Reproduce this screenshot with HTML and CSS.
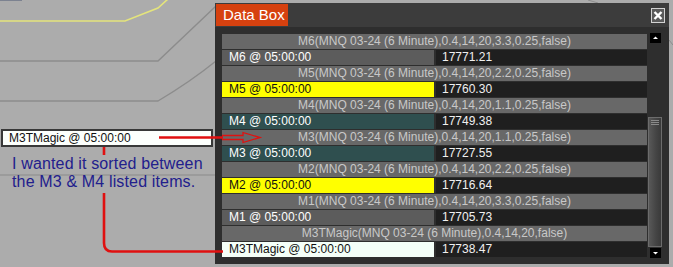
FILE: index.html
```html
<!DOCTYPE html>
<html lang="en">
<head>
    <meta charset="UTF-8">
    <meta name="viewport" content="width=device-width, initial-scale=1.0">
    <title>Data Box</title>
    <link rel="stylesheet" href="styles.css">
</head>
<body>
    <div class="desk">
        <!-- chart lines behind the window -->
        <svg class="backdrop" width="673" height="267" viewBox="0 0 673 267">
            <polyline points="0,21 125,21 158,8 168,-1" fill="none" stroke="#e4e47c" stroke-width="1.6"/>
            <polyline points="0,61 158,61 216,6" fill="none" stroke="#8c8c8c" stroke-width="1.4"/>
            <path d="M0,101 L158,101 Q190,82 216,61" fill="none" stroke="#8c8c8c" stroke-width="1.4"/>
            <line x1="0" y1="175" x2="216" y2="175" stroke="#8a8a8a" stroke-width="1"/>
            <line x1="0" y1="0.5" x2="22" y2="0.5" stroke="#7c8290" stroke-width="1"/>
            <line x1="588" y1="0" x2="598" y2="3" stroke="#8c8c8c" stroke-width="1"/>
            <line x1="669" y1="40" x2="673" y2="45" stroke="#8c8c8c" stroke-width="1"/>
        </svg>

        <div class="note-box">M3TMagic @ 05:00:00</div>
        <p class="note-text">I wanted it sorted between<br>the M3 &amp; M4 listed items.</p>

        <section class="window">
            <header class="titlebar">
                <span class="title">Data Box</span>
                <span class="close">
                    <svg width="12" height="13" viewBox="0 0 12 13">
                        <path d="M2.5,3 L9.5,10 M9.5,3 L2.5,10" stroke="#fff" stroke-width="2.4"/>
                    </svg>
                </span>
            </header>
            <div class="frame">
                <div class="list">
                    <div class="head">M6(MNQ 03-24 (6 Minute),0.4,14,20,3.3,0.25,false)</div>
                    <div class="item">
                        <span class="label">M6 @ 05:00:00</span>
                        <span class="value">17771.21</span>
                    </div>

                    <div class="head">M5(MNQ 03-24 (6 Minute),0.4,14,20,2.2,0.25,false)</div>
                    <div class="item">
                        <span class="label yellow">M5 @ 05:00:00</span>
                        <span class="value">17760.30</span>
                    </div>

                    <div class="head">M4(MNQ 03-24 (6 Minute),0.4,14,20,1.1,0.25,false)</div>
                    <div class="item">
                        <span class="label teal">M4 @ 05:00:00</span>
                        <span class="value">17749.38</span>
                    </div>

                    <div class="head">M3(MNQ 03-24 (6 Minute),0.4,14,20,1.1,0.25,false)</div>
                    <div class="item">
                        <span class="label teal">M3 @ 05:00:00</span>
                        <span class="value">17727.55</span>
                    </div>

                    <div class="head">M2(MNQ 03-24 (6 Minute),0.4,14,20,2.2,0.25,false)</div>
                    <div class="item">
                        <span class="label yellow">M2 @ 05:00:00</span>
                        <span class="value">17716.64</span>
                    </div>

                    <div class="head">M1(MNQ 03-24 (6 Minute),0.4,14,20,3.3,0.25,false)</div>
                    <div class="item">
                        <span class="label">M1 @ 05:00:00</span>
                        <span class="value">17705.73</span>
                    </div>

                    <div class="head">M3TMagic(MNQ 03-24 (6 Minute),0.4,14,20,false)</div>
                    <div class="item">
                        <span class="label white">M3TMagic @ 05:00:00</span>
                        <span class="value">17738.47</span>
                    </div>
                </div>

                <div class="scrollbar">
                    <span class="scroll-btn">
                        <svg width="11" height="10" viewBox="0 0 11 10"><polygon points="3,6 8,6 5.5,3.5" fill="#fff"/></svg>
                    </span>
                    <span class="thumb"><i></i><i></i><i></i></span>
                    <span class="scroll-btn">
                        <svg width="11" height="10" viewBox="0 0 11 10"><polygon points="3,4 8,4 5.5,6.5" fill="#fff"/></svg>
                    </span>
                </div>
            </div>
        </section>

        <!-- red markup drawn over everything -->
        <svg class="markup" width="673" height="267" viewBox="0 0 673 267">
            <line x1="159" y1="137.5" x2="223" y2="137.5" stroke="#e01010" stroke-width="2.4"/>
            <path d="M222,135.5 L243,135.5 L243,132.5 L260,137.5 L243,142.5 L243,139.5 L222,139.5" fill="none" stroke="#e01010" stroke-width="1.3"/>
            <line x1="104" y1="147" x2="104" y2="155" stroke="#e01010" stroke-width="2.6"/>
            <path d="M104,193 L104,243 Q104,251.5 112,251.5 L223,251.5" fill="none" stroke="#e01010" stroke-width="2.6"/>
        </svg>
    </div>
</body>
</html>
```

FILE: styles.css
```css
body {
    margin: 0;
    background: #acacac;
    font-family: 'Liberation Sans', Arial, sans-serif;
}

.desk {
    position: relative;
    width: 673px;
    height: 267px;
    overflow: hidden;
}

.backdrop,
.markup {
    position: absolute;
    left: 0;
    top: 0;
}

.markup {
    pointer-events: none;
}

/* annotation */
.note-box {
    position: absolute;
    left: 1px;
    top: 129px;
    width: 212px;
    height: 18px;
    box-sizing: border-box;
    border: 2px solid #383838;
    background: #fcfffc;
    color: #111;
    font-size: 12px;
    line-height: 14px;
    padding-left: 6px;
}

.note-text {
    position: absolute;
    left: 12px;
    top: 155px;
    margin: 0;
    font-size: 16px;
    line-height: 18px;
    letter-spacing: 0.15px;
    color: #22208c;
}

/* window */
.window {
    position: absolute;
    left: 215px;
    top: 3px;
    width: 454px;
    height: 261px;
    background: #2e2e2e;
    display: flex;
    flex-direction: column;
}

.titlebar {
    height: 24px;
    background: #3c3c3c;
    display: flex;
    align-items: center;
    justify-content: space-between;
    padding: 0 4px 0 1px;
}

.title {
    background: #d6410f;
    color: #fff;
    font-size: 15px;
    height: 22px;
    line-height: 22px;
    width: 72px;
    box-sizing: border-box;
    padding-left: 7px;
}

.close {
    width: 14px;
    height: 15px;
    box-sizing: border-box;
    border: 1px solid #d2d2d2;
    background: #5a5a5a;
    display: flex;
    align-items: center;
    justify-content: center;
}

.close svg {
    display: block;
}

.frame {
    flex: 1;
    display: flex;
    padding: 6px 6px 0 7px;
}

.list {
    width: 425px;
    margin-top: 1px;
    display: flex;
    flex-direction: column;
    gap: 1px;
    font-size: 12px;
}

.head {
    height: 15px;
    line-height: 15px;
    background: #686868;
    color: #c8c8c8;
    text-align: center;
    white-space: nowrap;
}

.item {
    display: grid;
    grid-template-columns: 212px 211px;
    gap: 2px;
    height: 15px;
    line-height: 15px;
}

.label {
    background: #5c5c5c;
    color: #fff;
    padding-left: 7px;
}

.label.yellow {
    background: #ffff00;
    color: #111;
}

.label.teal {
    background: #2f4f4f;
}

.label.white {
    background: #f4fff8;
    color: #111;
}

.value {
    background: #1f1f1f;
    color: #f0f0f0;
    padding-left: 6px;
}

/* scrollbar */
.scrollbar {
    width: 16px;
    display: flex;
    flex-direction: column;
    align-items: center;
}

.scroll-btn {
    width: 11px;
    height: 10px;
    background: #000;
}

.scroll-btn svg {
    display: block;
}

.thumb {
    margin-top: 74px;
    margin-bottom: 1px;
    width: 14px;
    height: 130px;
    box-sizing: border-box;
    border: 1px solid #6c6c6c;
    background: linear-gradient(to right, #585858, #444 60%, #3a3a3a);
    display: flex;
    flex-direction: column;
    align-items: flex-end;
    gap: 1px;
    padding: 2px 2px 0 0;
}

.thumb i {
    width: 8px;
    height: 1px;
    background: #8a8a8a;
}
```
